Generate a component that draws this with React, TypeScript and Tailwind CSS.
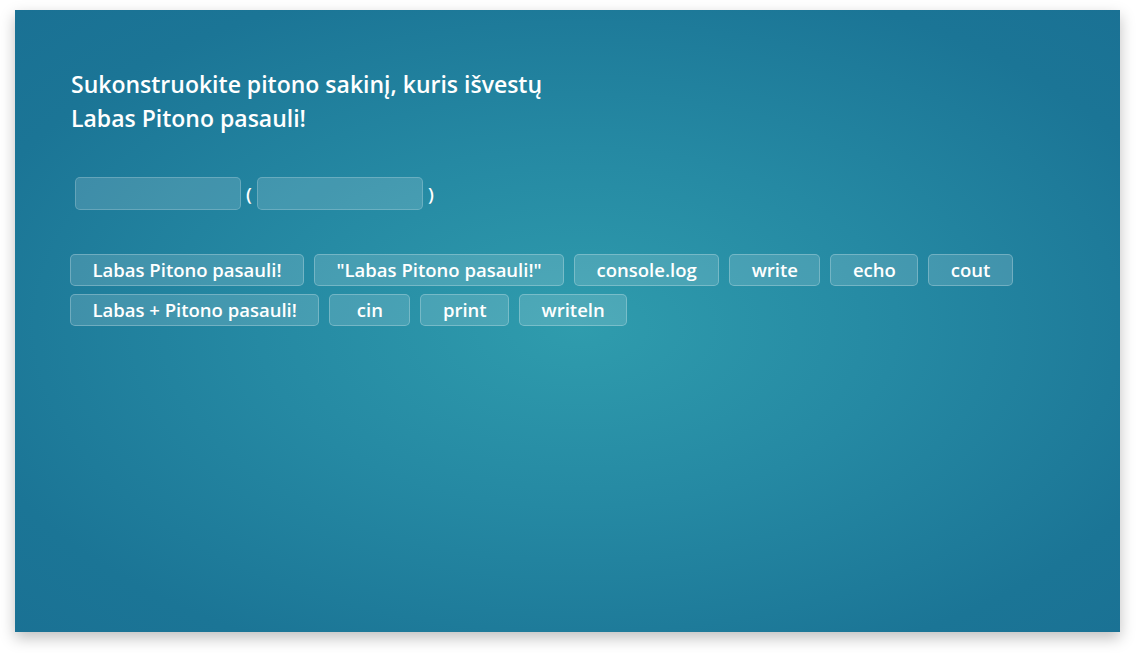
const words = [
  "Labas Pitono pasauli!",
  "\"Labas Pitono pasauli!\"",
  "console.log",
  "write",
  "echo",
  "cout",
  "Labas + Pitono pasauli!",
  "cin",
  "print",
  "writeln",
];

function Slot() {
  return (
    <div className="h-[33px] w-[166px] rounded-[5px] border border-white/20 bg-white/15" />
  );
}

export default function App() {
  return (
    <div
      className="h-[653px] w-[1136px] bg-white pl-[15px] pt-[10px]"
      style={{ fontFamily: '"Open Sans", "Liberation Sans", sans-serif' }}
    >
      <div className="h-[622px] w-[1105px] bg-[radial-gradient(ellipse_at_51%_51%,#2f9cad_0%,#2589a3_40%,#1b7596_80%,#1a7194_100%)] px-[56px] pt-[57px] text-white shadow-[0_6px_14px_rgba(0,0,0,0.25)]">
        <h1 className="text-[23px] font-semibold leading-[34px]">
          Sukonstruokite pitono sakinį, kuris išvestų
          <br />
          Labas Pitono pasauli!
        </h1>

        <div className="mt-[42px] flex items-center gap-[5px] pl-[4px] text-[18.5px] font-semibold">
          <Slot />
          <span>(</span>
          <Slot />
          <span>)</span>
        </div>

        <div className="-ml-px mt-[44px] flex w-[960px] flex-wrap gap-x-[10px] gap-y-[8px]">
          {words.map((w) => (
            <div
              key={w}
              className="flex h-[32px] min-w-[81px] items-center justify-center rounded-[5px] border border-white/25 bg-white/15 px-[21.5px] text-[18.5px] font-semibold"
            >
              {w}
            </div>
          ))}
        </div>
      </div>
    </div>
  );
}
